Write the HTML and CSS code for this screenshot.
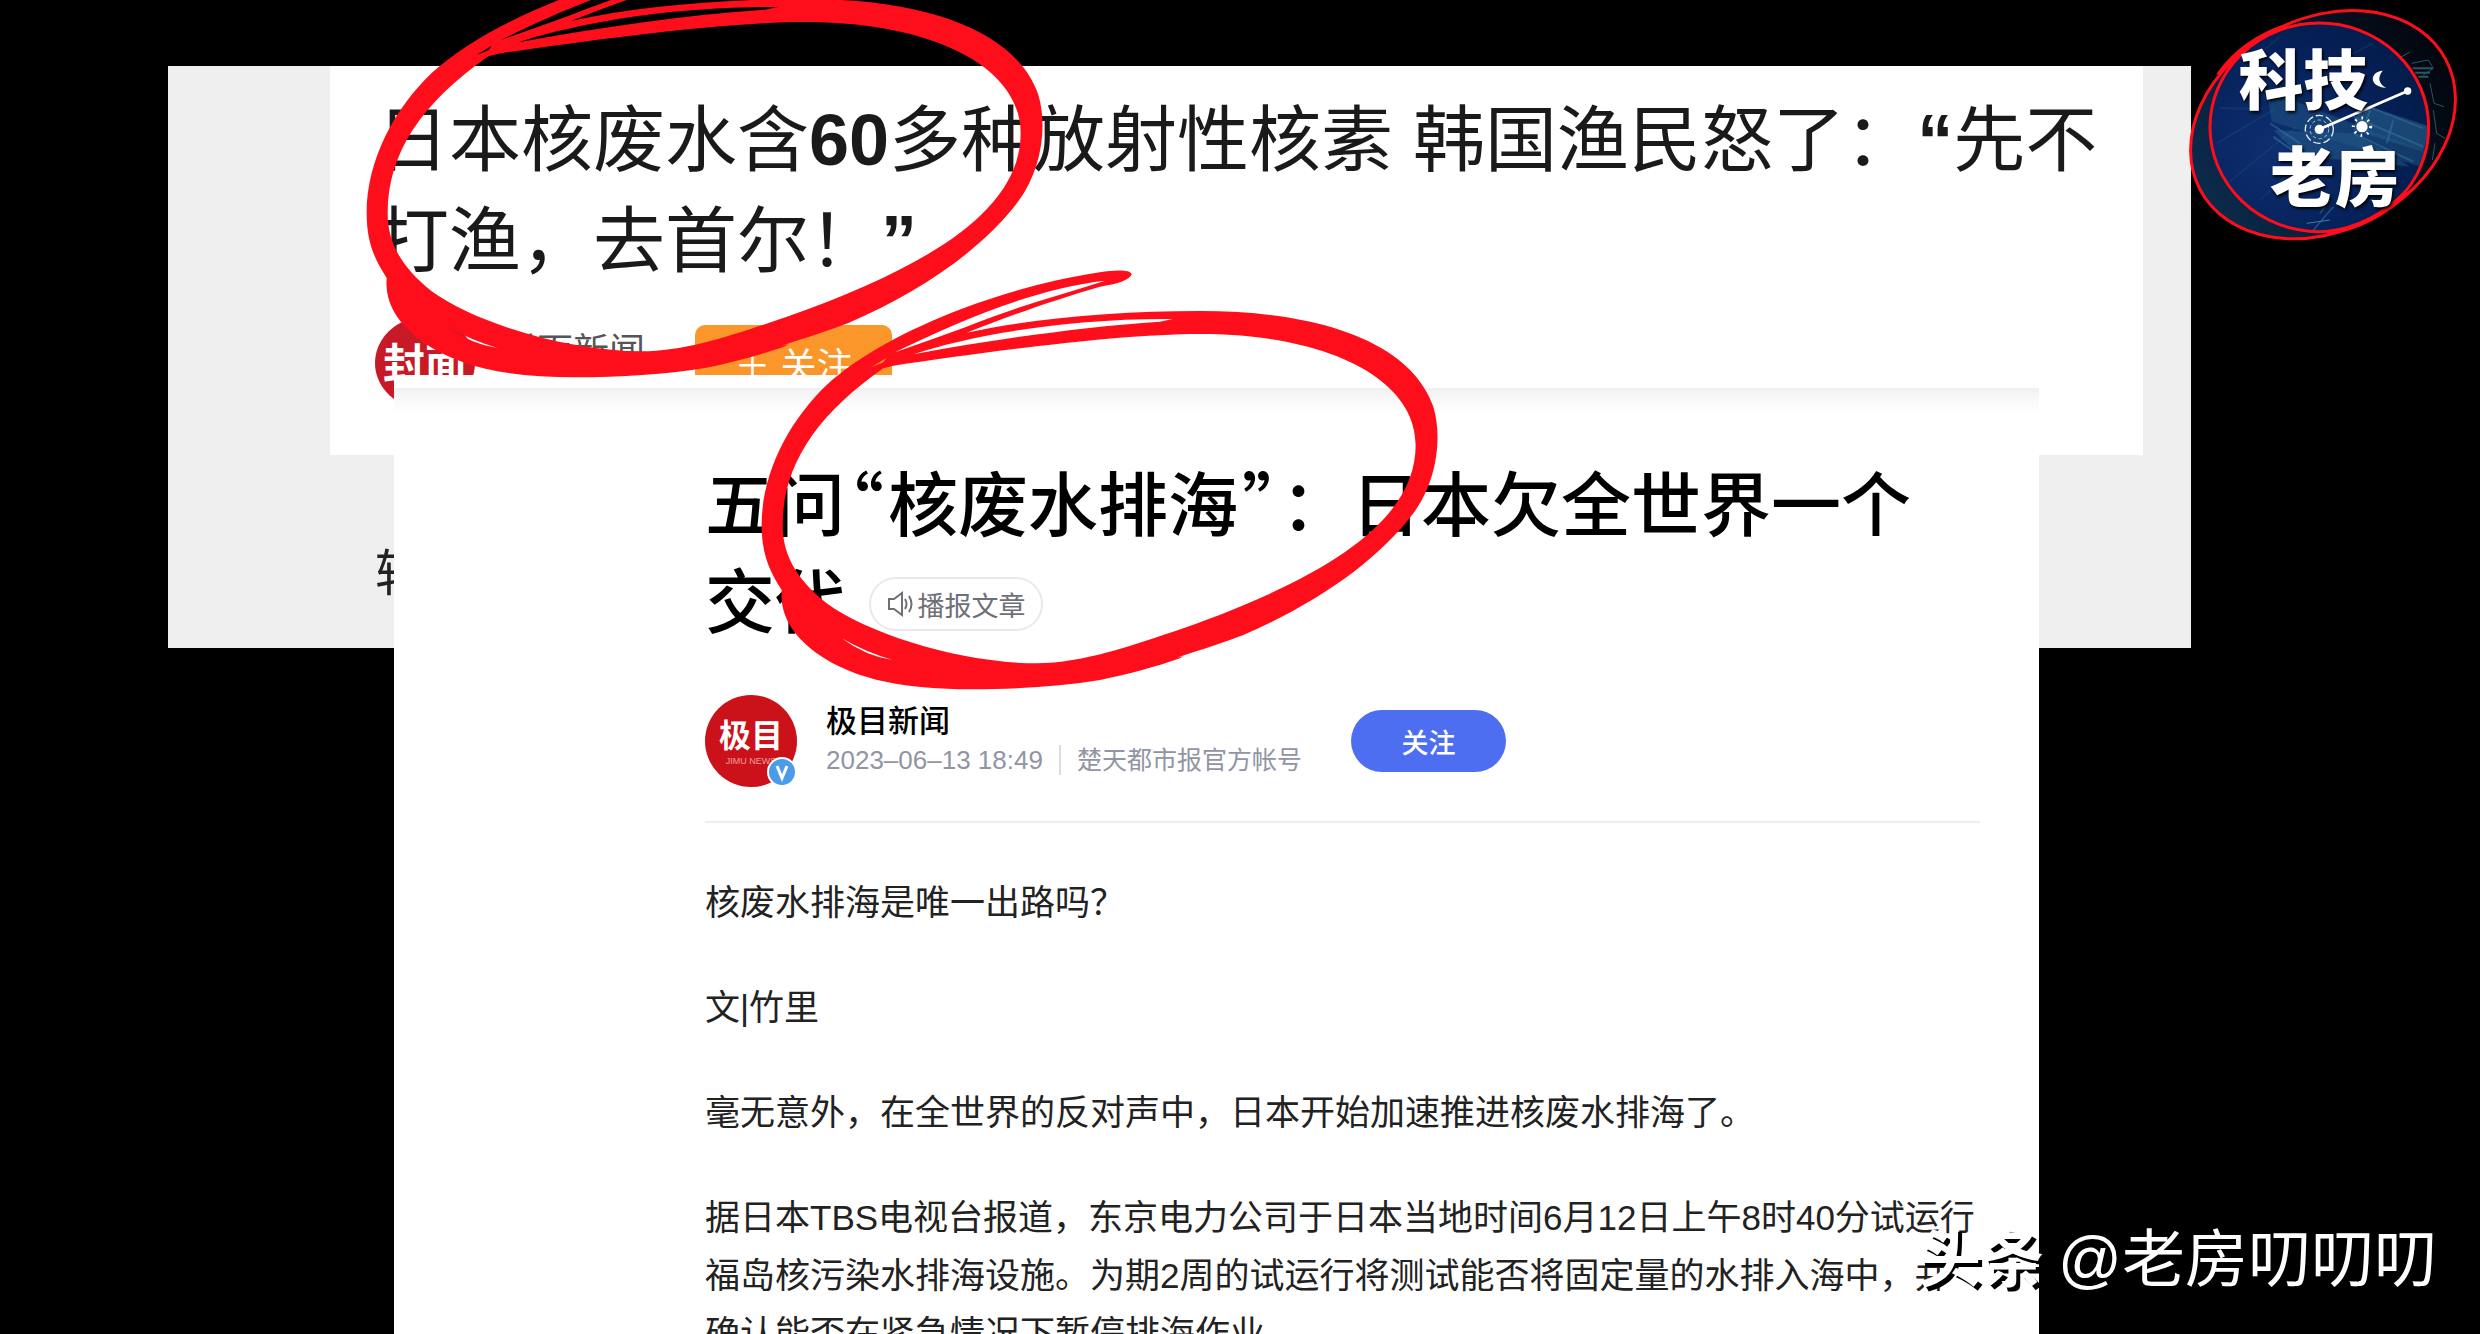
FILE: index.html
```html
<!DOCTYPE html>
<html lang="zh-CN">
<head>
    <meta charset="UTF-8">
    <meta name="viewport" content="width=device-width, initial-scale=1.0">
    <title>科技老房</title>
    <link rel="stylesheet" href="styles.css">
</head>
<body>
    <div class="stage">
        <!-- 后面的新闻 -->
        <section class="back">
            <div class="back-card">
                <h2>日本核废水含<b>60</b>多种放射性核素 韩国渔民怒了：<b>“</b>先不打渔，去首尔！<b>”</b></h2>
                <div class="source">
                    <span class="cover-logo">封面</span>
                    <span class="source-name">封面新闻</span>
                    <button class="follow-orange">＋ 关注</button>
                </div>
            </div>
            <p class="back-text">转</p>
        </section>

        <!-- 前面的文章 -->
        <article class="article">
            <header class="topbar"></header>
            <div class="content">
                <h1>五问<span class="quote">“</span>核废水排海<span class="quote">”</span>：日本欠全世界一个交代<button class="listen">
                    <svg viewBox="0 0 28 26" width="28" height="26" fill="none" stroke="#6f6f78" stroke-width="2">
                        <path d="M2 8h5l8-6v22l-8-6H2z"/>
                        <path d="M18 8q3 5 0 10M22 5q5 8 0 16"/>
                    </svg>播报文章</button></h1>

                <div class="author">
                    <div class="avatar">
                        <span class="avatar-name">极目</span>
                        <span class="avatar-en">JIMU NEWS</span>
                        <svg class="badge" viewBox="0 0 30 30" width="30" height="30">
                            <circle cx="15" cy="15" r="14" fill="#4a9be8" stroke="#fff" stroke-width="2"/>
                            <path d="M10 9l5 12 5-12" fill="none" stroke="#fff" stroke-width="3"/>
                        </svg>
                    </div>
                    <div class="info">
                        <div class="name">极目新闻</div>
                        <div class="meta">
                            <span class="date">2023–06–13 18:49</span>
                            <span class="account">楚天都市报官方帐号</span>
                        </div>
                    </div>
                    <button class="follow">关注</button>
                </div>

                <p>核废水排海是唯一出路吗？</p>
                <p>文|竹里</p>
                <p>毫无意外，在全世界的反对声中，日本开始加速推进核废水排海了。</p>
                <p>据日本TBS电视台报道，东京电力公司于日本当地时间6月12日上午8时40分试运行福岛核污染水排海设施。为期2周的试运行将测试能否将固定量的水排入海中，并确认能否在紧急情况下暂停排海作业。</p>
            </div>
        </article>
    </div>

    <!-- 红圈 -->
    <svg class="ring ring-1" viewBox="0 0 2100 1290" width="700" height="430">
        <path id="ring" fill="#fe0e1a" fill-rule="evenodd" d="M1145 28C1140 12 1090 16 1050 22C900 44 760 85 640 130C470 195 330 270 230 360C120 465 35 620 35 780C35 870 60 920 95 975C88 1060 140 1120 200 1165C320 1250 480 1273 660 1273C800 1273 930 1264 1050 1245C1130 1229 1220 1205 1290 1180L1300 1174L1280 1178C1350 1155 1430 1130 1480 1110C1700 1015 1880 890 1990 745C2060 650 2078 520 2050 425C1990 250 1750 138 1350 138C1100 138 850 160 650 203C760 160 900 108 1050 65C1100 58 1140 45 1145 28Z
        M430 302C700 262 1100 207 1350 207C1730 207 1997 340 1997 540C1997 760 1750 930 1300 1090C1150 1140 1000 1195 860 1195C640 1195 360 1110 230 1015C130 935 98 860 98 780C98 600 200 450 400 310Z
        M435 262C600 180 850 70 1065 47C930 90 800 125 650 185Q540 225 435 262Z
        M490 268C620 225 900 160 1268 162L1230 170C1000 185 740 222 490 268Z
        M275 1120Q350 1163 428 1185Q350 1175 275 1120Z
        M365 306L410 278L400 292Z"/>
    </svg>
    <svg class="ring ring-2" viewBox="0 0 2100 1290" width="700" height="430">
        <use href="#ring"/>
    </svg>

    <!-- 台标 -->
    <svg class="logo" viewBox="0 0 1020 810" width="340" height="270">
        <defs>
            <linearGradient id="outer" x1="0" y1="0" x2="1" y2="0">
                <stop offset="0" stop-color="#0b2a4c"/>
                <stop offset="0.7" stop-color="#06101f"/>
                <stop offset="1" stop-color="#02060d"/>
            </linearGradient>
            <radialGradient id="inner" cx="0.3" cy="0.6" r="0.8">
                <stop offset="0" stop-color="#0e2f70"/>
                <stop offset="0.6" stop-color="#06215a"/>
                <stop offset="1" stop-color="#041a45"/>
            </radialGradient>
            <clipPath id="disc"><ellipse cx="538" cy="382" rx="326" ry="314"/></clipPath>
        </defs>
        <ellipse cx="549" cy="374" rx="417" ry="318" transform="rotate(-28 549 374)" fill="url(#outer)" stroke="#fe0e1a" stroke-width="9"/>
        <g fill="none" stroke="#3c7585" stroke-width="3" opacity="0.7">
            <path d="M770 178l40-22M815 190l50-10 15 25-30 20M870 250l12 60 30 10M880 330l10 70 25 15M885 430l-8 50"/>
            <path d="M818 205h60M825 218h45M835 230h30" stroke-width="6"/>
        </g>
        <ellipse cx="538" cy="382" rx="328" ry="313" fill="url(#inner)"/>
        <g clip-path="url(#disc)" fill="none" stroke="#4f93b8" opacity="0.8">
            <path d="M380 270L870 460L840 500L395 365Z" fill="#2a6690" stroke="none" opacity="0.5"/>
            <path d="M400 390L480 470L620 480L810 500L640 400Z" fill="#2a6690" stroke="none" opacity="0.6"/>
            <path d="M660 310L870 380L850 455L640 390Z" fill="#2a6690" stroke="none" opacity="0.7"/>
            <path d="M340 255l120 50M660 310l190 75M640 350l210 90M390 370l90 60M400 410l70 50M690 330l-20 60M760 360l-20 70M640 400l180 85" stroke-width="4" opacity="0.7"/>
            <path d="M230 430L400 330M250 560L470 380M300 210L420 110M240 325h130M360 600l120-110M580 190l120-60" stroke-width="2" opacity="0.5"/>
            <path d="M520 690l60-70M540 640l30-40M500 670l70-10" stroke-width="3"/>
        </g>
        <ellipse cx="538" cy="382" rx="328" ry="313" fill="none" stroke="#fe0e1a" stroke-width="9"/>
        <path d="M235 225Q310 120 440 78M560 698Q700 680 800 575" fill="none" stroke="#fe0e1a" stroke-width="14"/>
        <circle cx="538" cy="388" r="42" fill="none" stroke="#e6f0f5" stroke-width="4" stroke-dasharray="22 9"/>
        <circle cx="538" cy="388" r="28" fill="none" stroke="#9fc6d8" stroke-width="3" stroke-dasharray="10 8"/>
        <path d="M538 388L803 273" stroke="#fff" stroke-width="8"/>
        <circle cx="538" cy="388" r="14" fill="#fff"/>
        <circle cx="803" cy="273" r="11" fill="#fff"/>
        <path d="M728 212C690 215 684 258 738 264C715 250 712 232 728 212Z" fill="#fff"/>
        <circle cx="666" cy="380" r="17" fill="#fff"/>
        <circle cx="666" cy="380" r="26" fill="none" stroke="#fff" stroke-width="9" stroke-dasharray="5 15"/>
        <g class="logo-text">
            <text x="296" y="311">科技</text>
            <text x="390" y="603">老房</text>
        </g>
    </svg>

    <div class="watermark"><b>头条</b><span>@老房叨叨叨</span></div>
</body>
</html>
```
FILE: styles.css
```css
* {
    box-sizing: border-box;
}

body {
    margin: 0;
    min-height: 100vh;
    background: #000;
    color: #222;
    font-family: "Liberation Sans", "Noto Sans CJK SC", sans-serif;
    position: relative;
    overflow: hidden;
}

h1, h2, p {
    margin: 0;
}

button {
    border: none;
    padding: 0;
    font-family: inherit;
    cursor: pointer;
}

/* 两个窗口叠放 */
.stage {
    display: grid;
    height: 100vh;
    overflow: hidden;
}

.back, .article {
    grid-area: 1 / 1;
}

.back {
    align-self: start;
    margin: 66px 289px 0 168px;
    padding-bottom: 39px;
    background: #efefef;
}

.back-card {
    margin: 0 48px 0 162px;
    padding: 24px 36px 46px 47px;
    background: #fff;
}

.back-card h2 {
    font-size: 72px;
    font-weight: 400;
    line-height: 101px;
    color: #1a1a1a;
}

.source {
    display: flex;
    margin: 25px 0 0 -2px;
}

.cover-logo {
    width: 100px;
    height: 92px;
    border-radius: 50%;
    background: #c81a26;
    color: #fff;
    font-size: 42px;
    font-weight: 700;
    line-height: 96px;
    text-align: center;
    white-space: nowrap;
}

.source-name {
    margin-left: 26px;
    width: 194px;
    font-size: 36px;
    line-height: 70px;
    color: #555;
}

.follow-orange {
    align-self: center;
    width: 197px;
    height: 76px;
    border-radius: 10px;
    background: #fb962a;
    color: #fff;
    font-size: 36px;
}

.back-text {
    margin: 84px 0 0 207px;
    font-size: 50px;
    line-height: 70px;
}

.article {
    margin: 375px 441px 0 394px;
    background: #fff;
}

.topbar {
    height: 40px;
    background: linear-gradient(#fff 13px, #efefef 13px, #f7f7f7 22px, #fff 38px);
}

.content {
    padding: 37px 59px 0 311px;
}

h1 {
    font-family: "Noto Sans CJK SC", sans-serif;
    font-size: 70px;
    font-weight: 500;
    line-height: 97px;
    color: #000;
}

/* 引号用半角宽度 */
.quote {
    margin: 0 4px;
    font-feature-settings: "halt";
}

.listen {
    display: inline-flex;
    align-items: center;
    justify-content: center;
    gap: 3px;
    width: 174px;
    height: 54px;
    margin: 28px 0 0 24px;
    border: 2px solid #e9e9ec;
    border-radius: 27px;
    background: #fff;
    color: #6f6f78;
    font-size: 27px;
    vertical-align: top;
}

.author {
    display: flex;
    align-items: center;
    margin: 49px 0 51px;
    padding-bottom: 34px;
    border-bottom: 2px solid #eee;
}

.avatar {
    position: relative;
    width: 92px;
    height: 92px;
    border-radius: 50%;
    background: #cb1119;
    color: #fff;
    text-align: center;
}

.avatar-name {
    display: block;
    margin-top: 22px;
    font-size: 32px;
    font-weight: 700;
    line-height: 38px;
}

.avatar-en {
    display: block;
    font-size: 9px;
    line-height: 12px;
    color: #f0a0a0;
}

.badge {
    position: absolute;
    right: 0;
    bottom: 0;
}

.info {
    margin-left: 29px;
}

.name {
    font-size: 31px;
    font-weight: 500;
    line-height: 38px;
    color: #000;
}

.meta {
    display: flex;
    align-items: center;
    line-height: 38px;
    color: #9195a3;
}

.date {
    font-size: 26px;
}

.account {
    margin-left: 16px;
    padding-left: 16px;
    border-left: 2px solid #dcdce2;
    font-size: 25px;
    line-height: 30px;
}

.follow {
    width: 155px;
    height: 62px;
    margin-left: 49px;
    border-radius: 31px;
    background: #4e6ef2;
    color: #fff;
    font-size: 27px;
    font-weight: 500;
}

.content p {
    margin-bottom: 47px;
    font-size: 35px;
    line-height: 58px;
}

.ring {
    position: absolute;
}

.ring-1 {
    left: 355px;
    top: -47px;
}

.ring-2 {
    left: 750px;
    top: 265px;
}

.logo {
    position: absolute;
    top: 0;
    right: 0;
}

.logo-text {
    font-family: "Noto Sans CJK SC", sans-serif;
    font-size: 194px;
    font-weight: 900;
    fill: #fff;
    filter: drop-shadow(4px 6px 4px #000);
}

.watermark {
    position: absolute;
    right: 43px;
    bottom: 29px;
    display: flex;
    align-items: center;
    gap: 14px;
    color: #fff;
    font-size: 63px;
    line-height: 92px;
}

.watermark b {
    color: #fff;
    text-shadow: 4px 4px 0 #000;
}
```
